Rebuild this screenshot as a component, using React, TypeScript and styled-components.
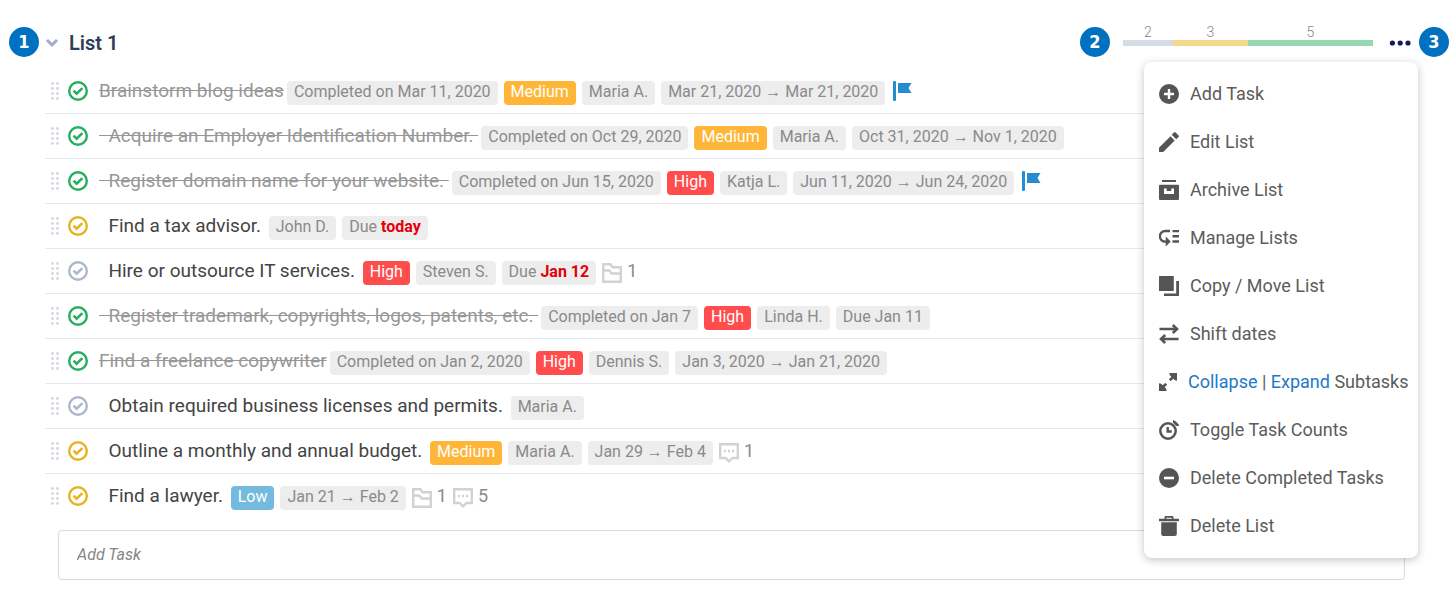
import React from "react";
import styled, { createGlobalStyle } from "styled-components";

const GlobalStyle = createGlobalStyle`
  *, *::before, *::after { box-sizing: border-box; }
  body { margin: 0; background: #fff; color: #444; font-family: Roboto, "Liberation Sans", sans-serif; }
  button, input { font: inherit; }
`;

type Status = "done" | "progress" | "open";
type Tone = "plain" | "medium" | "high" | "low";

const statusColor: Record<Status, string> = {
  done: "#27ae60",
  progress: "#e8b321",
  open: "#adb8cc",
};
const toneColor: Record<Tone, string> = {
  plain: "#ededed",
  medium: "#ffb638",
  high: "#ff4d4d",
  low: "#73bbde",
};

const Page = styled.main`
  padding: 26px 6px 24px 9px;
`;
const Header = styled.header`
  display: flex;
  align-items: flex-start;
  height: 43px;
`;
const Marker = styled.span`
  display: flex;
  align-items: center;
  justify-content: center;
  flex: none;
  width: 30px;
  height: 30px;
  margin-top: 1px;
  border-radius: 50%;
  background: #0070c0;
  color: #fff;
  font: bold 18px/30px "DejaVu Sans Condensed", "DejaVu Sans", sans-serif;
`;
const IconButton = styled.button`
  display: flex;
  align-items: center;
  justify-content: center;
  height: 34px;
  padding: 0;
  border: 0;
  background: none;
  cursor: pointer;
`;
const CollapseButton = styled(IconButton)`
  width: 14px;
  margin: 0 10px 0 6px;
`;
const Heading = styled.h1`
  flex: 1;
  margin: 0;
  color: #2f3e56;
  font-size: 20px;
  font-weight: 600;
  line-height: 34px;
`;
const Progress = styled.div`
  display: flex;
  width: 250px;
  margin: 0 16px 0 13px;
`;
const Segment = styled.div<{ $share: number; $color: string }>`
  flex: ${(p) => p.$share};
  padding-bottom: 2px;
  border-bottom: 6px solid ${(p) => p.$color};
  color: #858585;
  font-size: 14px;
  font-weight: 300;
  line-height: 12px;
  text-align: center;
`;
const MenuAnchor = styled.div`
  position: relative;
  margin-right: 8px;
`;
const Menu = styled.ul`
  position: absolute;
  z-index: 2;
  top: 36px;
  right: -7px;
  width: 274px;
  margin: 0;
  padding: 8px 0;
  border-radius: 8px;
  background: #fff;
  box-shadow: 0 2px 8px rgba(0, 0, 0, 0.24);
  list-style: none;
`;
const MenuItem = styled.li`
  display: flex;
  align-items: center;
  gap: 11px;
  height: 48px;
  padding-left: 15px;
  color: #5c5c5c;
  font-size: 18px;
  white-space: nowrap;
`;
const MenuButton = styled.button`
  display: flex;
  align-items: center;
  gap: 11px;
  padding: 0;
  border: 0;
  background: none;
  color: inherit;
  cursor: pointer;
`;
const MenuLabel = styled.span`
  padding-bottom: 2px;
`;
const MenuLink = styled.a`
  color: #1d79c7;
  text-decoration: none;
`;
const Tasks = styled.ul`
  margin: 0 31px 0 36px;
  padding: 0;
  list-style: none;
`;
const Row = styled.li`
  display: flex;
  align-items: center;
  height: 45px;
  padding-left: 5px;
  border-bottom: 1px solid #e6e7f0;
  &:last-child { border-bottom-color: transparent; }
`;
const Handle = styled.svg`
  flex: none;
  margin-right: 8px;
  fill: #d3d7e4;
`;
const Tick = styled.label`
  position: relative;
  display: flex;
  margin-right: 11px;
  cursor: pointer;
`;
const TickInput = styled.input`
  position: absolute;
  inset: 0;
  width: 100%;
  height: 100%;
  margin: 0;
  opacity: 0;
  cursor: pointer;
`;
const Line = styled.div`
  display: flex;
  align-items: baseline;
  gap: 6px;
  height: 24px;
`;
const Title = styled.span<{ $done: boolean }>`
  margin-right: -3px;
  color: ${(p) => (p.$done ? "#979797" : "#444")};
  font-size: 19px;
  line-height: 24px;
  white-space: pre;
  text-decoration: ${(p) => (p.$done ? "line-through" : "none")};
`;
const Chip = styled.span<{ $tone: Tone }>`
  padding: 0 7px 3px;
  border-radius: 4px;
  background: ${(p) => toneColor[p.$tone]};
  color: ${(p) => (p.$tone === "plain" ? "#8a8a8a" : "#fff")};
  font-size: 16px;
  line-height: 21px;
  white-space: nowrap;
`;
const Overdue = styled.b`
  color: #e2000b;
`;
const Flag = styled.svg`
  flex: none;
  align-self: flex-start;
  margin: 2px 0 0 2px;
  fill: #268bd2;
`;
const Count = styled.span`
  display: flex;
  align-items: baseline;
  gap: 5px;
  color: #8a8a8a;
  font-size: 18px;
  line-height: 24px;
`;
const CountIcon = styled.svg`
  flex: none;
  align-self: flex-start;
  margin-top: 4px;
  fill: none;
  stroke: #d2d2d2;
  stroke-width: 2.4;
`;
const AddTask = styled.input`
  display: block;
  width: calc(100% - 93px);
  height: 50px;
  margin: 11px 0 0 49px;
  padding: 0 18px 2px;
  border: 1px solid #d9d9d9;
  border-radius: 4px;
  background: #fff;
  font-size: 16px;
  font-style: italic;
  &::placeholder { color: #858585; opacity: 1; }
`;

interface Tag {
  text: string;
  tone?: Tone;
  overdue?: string;
}
interface Task {
  title: string;
  status: Status;
  tags: Tag[];
  flag?: boolean;
  files?: number;
  comments?: number;
}

const medium: Tag = { text: "Medium", tone: "medium" };
const high: Tag = { text: "High", tone: "high" };

const tasks: Task[] = [
  { title: "Brainstorm blog ideas", status: "done", flag: true, tags: [{ text: "Completed on Mar 11, 2020" }, medium, { text: "Maria A." }, { text: "Mar 21, 2020 → Mar 21, 2020" }] },
  { title: "  Acquire an Employer Identification Number. ", status: "done", tags: [{ text: "Completed on Oct 29, 2020" }, medium, { text: "Maria A." }, { text: "Oct 31, 2020 → Nov 1, 2020" }] },
  { title: "  Register domain name for your website. ", status: "done", flag: true, tags: [{ text: "Completed on Jun 15, 2020" }, high, { text: "Katja L." }, { text: "Jun 11, 2020 → Jun 24, 2020" }] },
  { title: "  Find a tax advisor. ", status: "progress", tags: [{ text: "John D." }, { text: "Due ", overdue: "today" }] },
  { title: "  Hire or outsource IT services. ", status: "open", files: 1, tags: [high, { text: "Steven S." }, { text: "Due ", overdue: "Jan 12" }] },
  { title: "  Register trademark, copyrights, logos, patents, etc. ", status: "done", tags: [{ text: "Completed on Jan 7" }, high, { text: "Linda H." }, { text: "Due Jan 11" }] },
  { title: "Find a freelance copywriter", status: "done", tags: [{ text: "Completed on Jan 2, 2020" }, high, { text: "Dennis S." }, { text: "Jan 3, 2020 → Jan 21, 2020" }] },
  { title: "  Obtain required business licenses and permits. ", status: "open", tags: [{ text: "Maria A." }] },
  { title: "  Outline a monthly and annual budget. ", status: "progress", comments: 1, tags: [medium, { text: "Maria A." }, { text: "Jan 29 → Feb 4" }] },
  { title: "  Find a lawyer. ", status: "progress", files: 1, comments: 5, tags: [{ text: "Low", tone: "low" }, { text: "Jan 21 → Feb 2" }] },
];

const MenuIcon = ({ size = 20, children }: { size?: number; children: React.ReactNode }) => (
  <svg width={size} height={size} viewBox="0 0 20 20" fill="#555" aria-hidden="true">{children}</svg>
);

const actions: { label: string; icon: React.ReactNode }[] = [
  { label: "Add Task", icon: <><circle cx="10" cy="10" r="10" /><path d="M10 5v10M5 10h10" stroke="#fff" strokeWidth="2.4" /></> },
  { label: "Edit List", icon: <path d="M0 15.8V20h4.2L15.700 8.500l-4.200-4.200zM19.600 5.100a1.500 1.500 0 0 0 0-1.600L16.700.5a1.400 1.400 0 0 0-1.800 0l-2.200 2.300 4.500 4.500z" /> },
  { label: "Archive List", icon: <path d="M3 0h14v2H3zM1 4.7h18a1 1 0 0 1 1 1V19a1 1 0 0 1-1 1H1a1 1 0 0 1-1-1V5.7a1 1 0 0 1 1-1zM5 8.5v5.5h10V8.5h-2.700v2.500H7.700V8.5z" fillRule="evenodd" /> },
  { label: "Manage Lists", icon: <><path d="M11 3H6.200a4.800 4.800 0 0 0 0 10.600H8" fill="none" stroke="#555" strokeWidth="2.4" /><path d="M6.700 8.500l5 5-5 5zM13.500 1.900H20v2.400h-6.500zM13.500 7.100H20v2.400h-6.500zM13.500 12.300H20v2.400h-6.500z" /></> },
  { label: "Copy / Move List", icon: <path d="M.6 0h14.200v15H0V.6zM17.200 5H20v14.400l-.6.600H5v-2.500h12.200z" /> },
  { label: "Shift dates", icon: <path d="M.5 5H18M13.800 1L18 5l-4.200 4M19.500 15H2M6.200 11L2 15l4.200 4" fill="none" stroke="#555" strokeWidth="2.6" /> },
  { label: "Subtasks", icon: <><path d="M4 16l4-4M12 8l4-4" stroke="#555" strokeWidth="3" /><path d="M0 11.500l2.500.500L8 17.500l.5 2.500H0zM20 8.500L17.500 8 12 2.500 11.500 0H20z" /></> },
  { label: "Toggle Task Counts", icon: <><circle cx="9" cy="11" r="7.700" fill="none" stroke="#555" strokeWidth="2.500" /><path d="M8.700 7v4.500h4.100" fill="none" stroke="#555" strokeWidth="2.400" /><path d="M14 0l2.400 1.200L19.800 4.600V6h-2.600l-3.200-3.200z" /></> },
  { label: "Delete Completed Tasks", icon: <><circle cx="10" cy="10" r="10" /><path d="M5 10h10" stroke="#fff" strokeWidth="2.6" /></> },
  { label: "Delete List", icon: <path d="M5.500 2.800V1.200Q5.500 0 6.700 0h6.600q1.200 0 1.200 1.200v1.600H20v2.400H0V2.800zM7.300 1.700v1.100h5.400V1.700zM2.200 6.300h15.600V18a2 2 0 0 1-2 2H4.200a2 2 0 0 1-2-2z" fillRule="evenodd" /> },
];

function TaskRow({ task }: { task: Task }) {
  return (
    <Row>
      <Handle width="10" height="20" viewBox="0 0 10 20" aria-hidden="true">
        {[2.5, 7.5, 12.5, 17.5].map((y) => (
          <React.Fragment key={y}>
            <circle cx="2.5" cy={y} r="1.4" />
            <circle cx="7.5" cy={y} r="1.4" />
          </React.Fragment>
        ))}
      </Handle>
      <Tick>
        <TickInput type="checkbox" defaultChecked={task.status === "done"} aria-label={task.title.trim()} />
        <svg width="20" height="20" viewBox="0 0 20 20" fill="none" stroke={statusColor[task.status]} aria-hidden="true">
          <circle cx="10" cy="10" r="8.8" strokeWidth="2.4" />
          <path d="M5.6 9.7l3 3 5.8-5.6" strokeWidth="2.6" />
        </svg>
      </Tick>
      <Line>
        <Title $done={task.status === "done"}>{task.title}</Title>
        {task.tags.map((tag) => (
          <Chip key={tag.text} $tone={tag.tone ?? "plain"}>
            {tag.text}
            {tag.overdue && <Overdue>{tag.overdue}</Overdue>}
          </Chip>
        ))}
        {task.flag && (
          <Flag width="19" height="20" viewBox="0 0 19 20" role="img" aria-label="Milestone">
            <rect width="3" height="20" rx="1" />
            <path d="M5 2h13.500l-3 5 3 5H5z" />
          </Flag>
        )}
        {task.files && (
          <Count>
            <CountIcon width="20" height="20" viewBox="0 0 20 20" aria-label="Files">
              <path d="M1.200 18.800V1.200h7.300l2 3h8.300v14.600zM1.200 7.500h6l2.500 3h9" />
            </CountIcon>
            {task.files}
          </Count>
        )}
        {task.comments && (
          <Count>
            <CountIcon width="20" height="20" viewBox="0 0 20 20" aria-label="Comments">
              <path d="M1.200 1.200h17.600v13.800h-5.300L10 18.300 6.500 15H1.200z" />
              <path d="M5 8h2M9 8h2M13 8h2" />
            </CountIcon>
            {task.comments}
          </Count>
        )}
      </Line>
    </Row>
  );
}

export default function App() {
  return (
    <Page>
      <GlobalStyle />
      <Header>
        <Marker>1</Marker>
        <CollapseButton aria-label="Collapse list">
          <svg width="14" height="10" viewBox="0 0 14 10" fill="none" stroke="#a3a9cc" strokeWidth="3">
            <path d="M2 2l5 5 5-5" />
          </svg>
        </CollapseButton>
        <Heading>List 1</Heading>
        <Marker>2</Marker>
        <Progress>
          <Segment $share={2} $color="#d5dbe7">2</Segment>
          <Segment $share={3} $color="#f4d98b">3</Segment>
          <Segment $share={5} $color="#94d7b0">5</Segment>
        </Progress>
        <MenuAnchor>
          <IconButton aria-label="List options" aria-expanded="true">
            <svg width="22" height="6" viewBox="0 0 22 6" fill="#101b5c">
              <circle cx="3.4" cy="3" r="2.6" />
              <circle cx="11.200" cy="3" r="2.6" />
              <circle cx="19" cy="3" r="2.6" />
            </svg>
          </IconButton>
          <Menu>
            {actions.map(({ label, icon }) => (
              <MenuItem key={label}>
                {label === "Subtasks" ? (
                  <>
                    <MenuIcon size={18}>{icon}</MenuIcon>
                    <MenuLabel>
                      <MenuLink href="#collapse">Collapse</MenuLink> | <MenuLink href="#expand">Expand</MenuLink> {label}
                    </MenuLabel>
                  </>
                ) : (
                  <MenuButton>
                    <MenuIcon>{icon}</MenuIcon>
                    <MenuLabel>{label}</MenuLabel>
                  </MenuButton>
                )}
              </MenuItem>
            ))}
          </Menu>
        </MenuAnchor>
        <Marker>3</Marker>
      </Header>
      <Tasks>
        {tasks.map((task) => (
          <TaskRow key={task.title} task={task} />
        ))}
      </Tasks>
      <AddTask placeholder="Add Task" aria-label="Add Task" />
    </Page>
  );
}
